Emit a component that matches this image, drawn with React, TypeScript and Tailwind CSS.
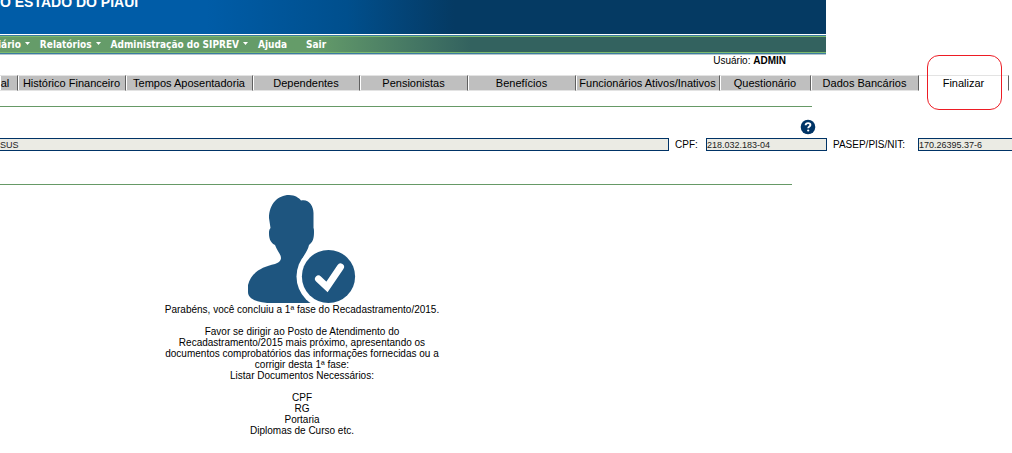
import React from 'react';

const menuItems = [
  { label: 'iário', hasSubmenu: true },
  { label: 'Relatórios', hasSubmenu: true },
  { label: 'Administração do SIPREV', hasSubmenu: true },
  { label: 'Ajuda', hasSubmenu: false },
  { label: 'Sair', hasSubmenu: false },
];

const tabs = [
  { label: 'al', width: 'w-[18px] pr-[7px]' },
  { label: 'Histórico Financeiro', width: 'w-[108px]' },
  { label: 'Tempos Aposentadoria', width: 'w-[127px]' },
  { label: 'Dependentes', width: 'w-[107px]' },
  { label: 'Pensionistas', width: 'w-[108px]' },
  { label: 'Benefícios', width: 'w-[108px]' },
  { label: 'Funcionários Ativos/Inativos', width: 'w-[144px]' },
  { label: 'Questionário', width: 'w-[91px]' },
  { label: 'Dados Bancários', width: 'w-[108px]' },
];

const documents = ['CPF', 'RG', 'Portaria', 'Diplomas de Curso etc.'];

const Header = () => (
  <header className="mr-[186px]">
    <div className="h-[34px] overflow-hidden bg-linear-to-r from-[#005ca7] from-25% via-[#004f8d] via-42% to-[#053a63] to-55%">
      <h1 className="-mt-[6px] text-[14px] leading-4 font-bold whitespace-nowrap text-white">O ESTADO DO PIAUÍ</h1>
    </div>
    <div className="mt-px border-y border-[#3b7ca0] shadow-[0_1px_0_#b3c4cc]">
      <nav className="h-[17px] border-y border-[#7cba6c] bg-linear-to-r from-[#659c69] from-38% to-[#33625f] to-57%">
        <ul className="-ml-0.5 flex h-full items-center gap-[10px] font-['DejaVu_Sans_Condensed','DejaVu_Sans',sans-serif] text-[10px] font-bold whitespace-nowrap text-white">
          {menuItems.map((item) => (
            <li key={item.label}>
              <a href="#" className="flex items-center gap-1">
                {item.label}
                {item.hasSubmenu ? (
                  <svg width="5" height="5" viewBox="0 0 5 5" fill="currentColor">
                    <path d="M0 0h5L2.500 3z" />
                  </svg>
                ) : (
                  <span className="w-[5px]" />
                )}
              </a>
            </li>
          ))}
        </ul>
      </nav>
    </div>
  </header>
);

const TabBar = () => (
  <div role="tablist" className="flex text-[11px] leading-[14px] whitespace-nowrap">
    {tabs.map((tab) => (
      <button
        key={tab.label}
        role="tab"
        className={`${tab.width} shrink-0 border-y border-r border-y-[#e3e3e3] border-r-[#606060] bg-[#bfbfbf] text-center shadow-[inset_1px_0_0_#fff]`}
      >
        {tab.label}
      </button>
    ))}
    <button role="tab" aria-selected="true" className="relative w-[90px] shrink-0 border-y border-r border-t-[#e3e3e3] border-r-[#606060] border-b-white bg-white text-center">
      Finalizar
      <span className="absolute -top-[21px] left-[8px] h-[55px] w-[75px] rounded-xl border border-[#ed1c24]" />
    </button>
  </div>
);

const HelpIcon = () => (
  <svg width="16" height="16" viewBox="0 0 16 16">
    <circle cx="8" cy="8" r="7.300" fill="#003466" />
    <path d="M5.600 6.300C5.700 4.700 6.700 4.100 8.100 4.100c1.400 0 2.300.7 2.300 1.800 0 1.600-2.200 1.600-2.200 3.300" fill="none" stroke="#fff" strokeWidth="1.900" />
    <circle cx="8.200" cy="11.500" r="1.100" fill="#fff" />
  </svg>
);

const UserCheckIcon = () => (
  <svg width="108" height="109" viewBox="1 0 108 109" fill="#1e557f">
    <path d="M42 0C48 0 52 3 54 5.500C61 3.500 66.500 10 66.500 18V33C67 34 67 35 67 37C67 43 66 47 62 50C61 56 56.500 60 55 65C56 68 58 69 60 72L66 108H26C10 108 1 104 1 97V90C4 78 14 72 28 69C31 68 34 66 34 63C34 59 30 56 28 50C24 48 22 44 22 39C22 36 22 35 23.500 33L22 23C22 9 31 0 42 0Z" />
    <circle cx="81.500" cy="81.500" r="32" fill="#fff" />
    <circle cx="81.500" cy="81.500" r="26.600" />
    <path d="M71.500 84l8.500 8L93.500 72" fill="none" stroke="#fff" strokeWidth="7" strokeLinecap="round" strokeLinejoin="miter" />
  </svg>
);

const inputStyle = 'h-[13px] border border-[#003366] bg-[#ebebe4] text-[9px] leading-[11px] text-[#222] outline-none';

const App: React.FC = () => {
  return (
    <div className="overflow-hidden bg-white font-['Liberation_Sans',Arial,sans-serif] text-[10px] leading-[11px] text-black">
      <Header />
      <p className="mt-px mr-[226px] mb-[9px] text-right">
        Usuário: <strong>ADMIN</strong>
      </p>
      <TabBar />

      <main>
        <hr className="mt-[15px] mr-[200px] border-[#669966]" />
        <div className="mt-3 mr-[196px] flex justify-end">
          <button aria-label="Ajuda">
            <HelpIcon />
          </button>
        </div>
        <form className="mt-[3px] flex items-center whitespace-nowrap">
          <input aria-label="Nome" className={`${inputStyle} min-w-0 flex-1 border-l-0`} defaultValue="SUS" readOnly />
          <label htmlFor="cpf" className="w-[37px] pl-[6px]">CPF:</label>
          <input id="cpf" className={`${inputStyle} w-[121px]`} defaultValue="218.032.183-04" readOnly />
          <label htmlFor="nit" className="w-[91px] pl-[6px]">PASEP/PIS/NIT:</label>
          <input id="nit" className={`${inputStyle} w-[94px] border-r-0`} defaultValue="170.26395.37-6" readOnly />
        </form>
        <hr className="mt-[33px] mr-[220px] border-[#669966]" />

        <section className="mt-[10px] ml-[152px] flex w-[300px] flex-col items-center text-center">
          <UserCheckIcon />
          <p>Parabéns, você concluiu a 1ª fase do Recadastramento/2015.</p>
          <p className="mt-[11px]">
            Favor se dirigir ao Posto de Atendimento do
            <br />
            Recadastramento/2015 mais próximo, apresentando os
            <br />
            documentos comprobatórios das informações fornecidas ou a
            <br />
            corrigir desta 1ª fase:
          </p>
          <p>Listar Documentos Necessários:</p>
          <ul className="mt-[11px]">
            {documents.map((doc) => (
              <li key={doc}>{doc}</li>
            ))}
          </ul>
        </section>
      </main>
    </div>
  );
};

export default App;
